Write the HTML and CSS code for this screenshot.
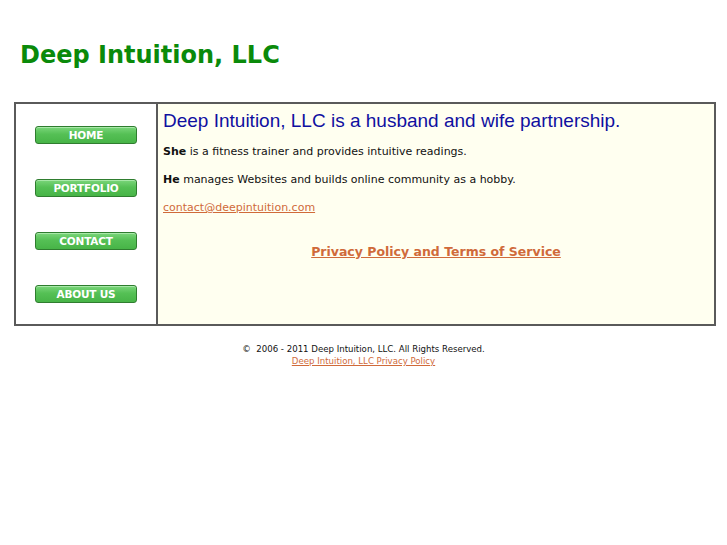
FILE: index.html
```html
<!DOCTYPE html>
<html>
<head>
<meta charset="utf-8">
<link rel="stylesheet" href="styles.css">
</head>
<body>
<h1 class="site-title">Deep Intuition, LLC</h1>
<div class="frame">
  <div class="nav">
    <a class="btn" href="#">HOME</a>
    <a class="btn" href="#">PORTFOLIO</a>
    <a class="btn" href="#">CONTACT</a>
    <a class="btn" href="#">ABOUT US</a>
  </div>
  <div class="content">
    <h2 class="lead">Deep Intuition, LLC is a husband and wife partnership.</h2>
    <p class="txt"><b>She</b> is a fitness trainer and provides intuitive readings.</p>
    <p class="txt"><b>He</b> manages Websites and builds online community as a hobby.</p>
    <p class="txt"><a class="link" href="#">contact@deepintuition.com</a></p>
    <p class="privacy"><a class="link" href="#">Privacy Policy and Terms of Service</a></p>
  </div>
</div>
<div class="footer">
  <div>&copy;&nbsp; 2006 - 2011 Deep Intuition, LLC. All Rights Reserved.</div>
  <div><a class="link" href="#">Deep Intuition, LLC Privacy Policy</a></div>
</div>
</body>
</html>
```
FILE: styles.css
```css
body {
  margin: 0;
  background: #ffffff;
  font-family: "DejaVu Sans", Verdana, sans-serif;
  color: #111;
}
.site-title {
  margin: 0;
  padding: 41px 0 0 20px;
  height: 102px;
  box-sizing: border-box;
  font-size: 24px;
  font-weight: bold;
  color: #0a8a0a;
  line-height: 28px;
}
.frame {
  margin: 0 11px 0 14px;
  height: 224px;
  box-sizing: border-box;
  border: 2px solid #5a5a5a;
  display: flex;
}
.nav {
  width: 142px;
  flex: none;
  border-right: 2px solid #5a5a5a;
  background: #fff;
  display: flex;
  flex-direction: column;
  align-items: flex-start;
  padding: 22px 0 0 19px;
  box-sizing: border-box;
  gap: 35px;
}
.btn {
  display: block;
  width: 102px;
  height: 18px;
  box-sizing: border-box;
  border: 1px solid #2f7d2f;
  border-radius: 3px;
  background: linear-gradient(#7bd67b, #55c055 45%, #47b447);
  box-shadow: inset 0 1px 0 #a8e8a8;
  color: #fff;
  text-decoration: none;
  text-align: center;
  font-family: "DejaVu Sans", sans-serif;
  font-weight: bold;
  font-size: 10.5px;
  line-height: 16px;
  letter-spacing: -0.2px;
}
.content {
  flex: 1;
  background: #fffff0;
  padding: 5px 5px 0 5px;
}
.lead {
  margin: 0 0 11px 0;
  font-family: "Liberation Sans", Arial, sans-serif;
  font-weight: normal;
  font-size: 19px;
  line-height: 24px;
  color: #1010a0;
}
.txt {
  margin: 0 0 12px 0;
  font-size: 11px;
  line-height: 16px;
}
.link {
  color: #d06a3a;
}
.privacy {
  margin: 28px 0 0 0;
  text-align: center;
  font-weight: bold;
  font-size: 12.5px;
  line-height: 16px;
}
.footer {
  margin-top: 17px;
  text-align: center;
  font-size: 8.6px;
  line-height: 12px;
}
```
